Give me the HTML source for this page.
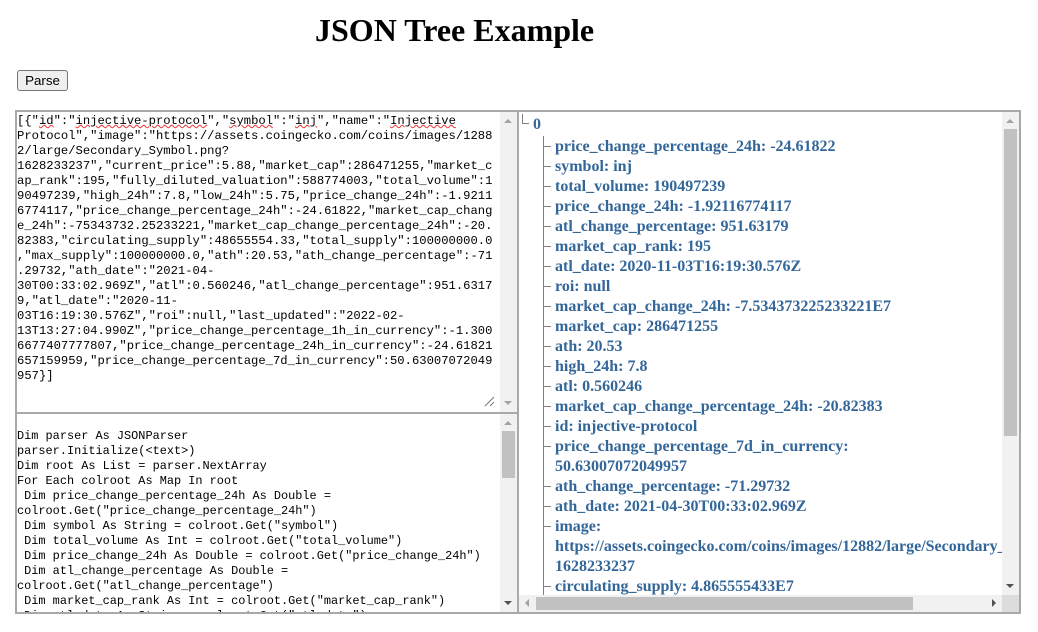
<!DOCTYPE html>
<html lang="en">
<head>
<meta charset="utf-8">
<title>JSON Tree Example</title>
<style>
html,body{margin:0;padding:0;background:#fff;width:1038px;height:632px;overflow:hidden}
.a{position:absolute}
h1{position:absolute;left:315px;top:12px;margin:0;font:bold 32px/36px "Liberation Serif",serif;color:#000;white-space:nowrap}
button{position:absolute;left:17px;top:70px;width:51px;height:21px;padding:0;border:1px solid #767676;border-radius:3px;background:#efefef;font:13.33px "Liberation Sans",sans-serif;color:#000}
.code{position:absolute;left:17px;font-family:"Liberation Mono",monospace;line-height:15px;color:#000;white-space:pre;overflow:hidden}
.s{text-decoration:underline wavy #e33;text-decoration-thickness:1px;text-underline-offset:0}
#tree{position:absolute;left:519px;top:113px;width:483px;height:482px;overflow:hidden;font:bold 16px/20px "Liberation Serif",serif;color:#336699;white-space:nowrap}
#tree div{position:absolute;left:36px}
#tree i{position:absolute;background:#808080}
.tk{left:24px;width:8px;height:1px}
.tri{position:absolute;width:0;height:0}
</style>
</head>
<body>
<h1>JSON Tree Example</h1>
<button>Parse</button>

<!-- frame -->
<div class="a" style="left:15px;top:110px;width:1006px;height:2px;background:#a9a9a9"></div>
<div class="a" style="left:15px;top:612px;width:1006px;height:2px;background:#a9a9a9"></div>
<div class="a" style="left:15px;top:110px;width:2px;height:504px;background:#a9a9a9"></div>
<div class="a" style="left:1019px;top:110px;width:2px;height:504px;background:#a9a9a9"></div>
<div class="a" style="left:517px;top:110px;width:2px;height:504px;background:#a9a9a9"></div>
<div class="a" style="left:15px;top:412px;width:503px;height:2px;background:#a9a9a9"></div>

<!-- top text -->
<div class="code" style="top:114px;width:483px;height:298px;font-size:12.2px">[{"<span class="s">id</span>":"<span class="s">injective-protocol</span>","<span class="s">symbol</span>":"<span class="s">inj</span>","name":"<span class="s">Injective</span>
Protocol","image":"https://assets.coingecko.com/coins/images/1288
2/large/Secondary_Symbol.png?
1628233237","current_price":5.88,"market_cap":286471255,"market_c
ap_rank":195,"fully_diluted_valuation":588774003,"total_volume":1
90497239,"high_24h":7.8,"low_24h":5.75,"price_change_24h":-1.9211
6774117,"price_change_percentage_24h":-24.61822,"market_cap_chang
e_24h":-75343732.25233221,"market_cap_change_percentage_24h":-20.
82383,"circulating_supply":48655554.33,"total_supply":100000000.0
,"max_supply":100000000.0,"ath":20.53,"ath_change_percentage":-71
.29732,"ath_date":"2021-04-
30T00:33:02.969Z","atl":0.560246,"atl_change_percentage":951.6317
9,"atl_date":"2020-11-
03T16:19:30.576Z","roi":null,"last_updated":"2022-02-
13T13:27:04.990Z","price_change_percentage_1h_in_currency":-1.300
6677407777807,"price_change_percentage_24h_in_currency":-24.61821
657159959,"price_change_percentage_7d_in_currency":50.63007072049
957}]</div>

<!-- top scrollbar -->
<div class="a" style="left:500px;top:112px;width:17px;height:300px;background:#f1f1f1"></div>
<div class="tri" style="left:504px;top:119px;border:4px solid transparent;border-top:0;border-bottom:4px solid #a3a3a3"></div>
<div class="tri" style="left:504px;top:401px;border:4px solid transparent;border-bottom:0;border-top:4px solid #a3a3a3"></div>
<svg class="a" style="left:484px;top:396px" width="11" height="11"><path d="M1 10L10 1M6 10L10 6" stroke="#777" stroke-width="1" fill="none"/></svg>

<!-- bottom text -->
<div class="code" style="top:429px;width:483px;height:183px;font-size:11.9px">Dim parser As JSONParser
parser.Initialize(&lt;text&gt;)
Dim root As List = parser.NextArray
For Each colroot As Map In root
 Dim price_change_percentage_24h As Double =
colroot.Get("price_change_percentage_24h")
 Dim symbol As String = colroot.Get("symbol")
 Dim total_volume As Int = colroot.Get("total_volume")
 Dim price_change_24h As Double = colroot.Get("price_change_24h")
 Dim atl_change_percentage As Double =
colroot.Get("atl_change_percentage")
 Dim market_cap_rank As Int = colroot.Get("market_cap_rank")
 Dim atl_date As String = colroot.Get("atl_date")</div>

<!-- bottom scrollbar -->
<div class="a" style="left:500px;top:414px;width:17px;height:198px;background:#f1f1f1"></div>
<div class="a" style="left:502px;top:431px;width:13px;height:47px;background:#c1c1c1"></div>
<div class="tri" style="left:504px;top:421px;border:4px solid transparent;border-top:0;border-bottom:4px solid #a3a3a3"></div>
<div class="tri" style="left:504px;top:601px;border:4px solid transparent;border-bottom:0;border-top:4px solid #505050"></div>

<!-- tree -->
<div id="tree">
<i style="left:3px;top:1px;width:1px;height:10px"></i><i style="left:3px;top:10px;width:7px;height:1px"></i>
<i style="left:24px;top:23px;width:1px;height:460px"></i>
<div style="left:14px;top:2px">0</div>

<i class="tk" style="top:33px"></i><div style="top:24px">price_change_percentage_24h: -24.61822</div>
<i class="tk" style="top:53px"></i><div style="top:44px">symbol: inj</div>
<i class="tk" style="top:73px"></i><div style="top:64px">total_volume: 190497239</div>
<i class="tk" style="top:93px"></i><div style="top:84px">price_change_24h: -1.92116774117</div>
<i class="tk" style="top:113px"></i><div style="top:104px">atl_change_percentage: 951.63179</div>
<i class="tk" style="top:133px"></i><div style="top:124px">market_cap_rank: 195</div>
<i class="tk" style="top:153px"></i><div style="top:144px">atl_date: 2020-11-03T16:19:30.576Z</div>
<i class="tk" style="top:173px"></i><div style="top:164px">roi: null</div>
<i class="tk" style="top:193px"></i><div style="top:184px">market_cap_change_24h: -7.534373225233221E7</div>
<i class="tk" style="top:213px"></i><div style="top:204px">market_cap: 286471255</div>
<i class="tk" style="top:233px"></i><div style="top:224px">ath: 20.53</div>
<i class="tk" style="top:253px"></i><div style="top:244px">high_24h: 7.8</div>
<i class="tk" style="top:273px"></i><div style="top:264px">atl: 0.560246</div>
<i class="tk" style="top:293px"></i><div style="top:284px">market_cap_change_percentage_24h: -20.82383</div>
<i class="tk" style="top:313px"></i><div style="top:304px">id: injective-protocol</div>
<i class="tk" style="top:333px"></i><div style="top:324px">price_change_percentage_7d_in_currency:<br>50.63007072049957</div>
<i class="tk" style="top:373px"></i><div style="top:364px">ath_change_percentage: -71.29732</div>
<i class="tk" style="top:393px"></i><div style="top:384px">ath_date: 2021-04-30T00:33:02.969Z</div>
<i class="tk" style="top:413px"></i><div style="top:404px">image:<br>https://assets.coingecko.com/coins/images/12882/large/Secondary_Symbol.png?<br>1628233237</div>
<i class="tk" style="top:473px"></i><div style="top:464px">circulating_supply: 4.865555433E7</div>
</div>

<!-- right scrollbars -->
<div class="a" style="left:1002px;top:112px;width:17px;height:483px;background:#f1f1f1"></div>
<div class="a" style="left:1004px;top:129px;width:13px;height:307px;background:#c1c1c1"></div>
<div class="tri" style="left:1006px;top:119px;border:4px solid transparent;border-top:0;border-bottom:4px solid #a3a3a3"></div>
<div class="tri" style="left:1006px;top:584px;border:4px solid transparent;border-bottom:0;border-top:4px solid #505050"></div>
<div class="a" style="left:519px;top:595px;width:483px;height:17px;background:#f1f1f1"></div>
<div class="a" style="left:536px;top:597px;width:377px;height:13px;background:#c1c1c1"></div>
<div class="tri" style="left:525px;top:599px;border:4px solid transparent;border-left:0;border-right:4px solid #a3a3a3"></div>
<div class="tri" style="left:992px;top:599px;border:4px solid transparent;border-right:0;border-left:4px solid #505050"></div>
<div class="a" style="left:1002px;top:595px;width:17px;height:17px;background:#dcdcdc"></div>
</body>
</html>
